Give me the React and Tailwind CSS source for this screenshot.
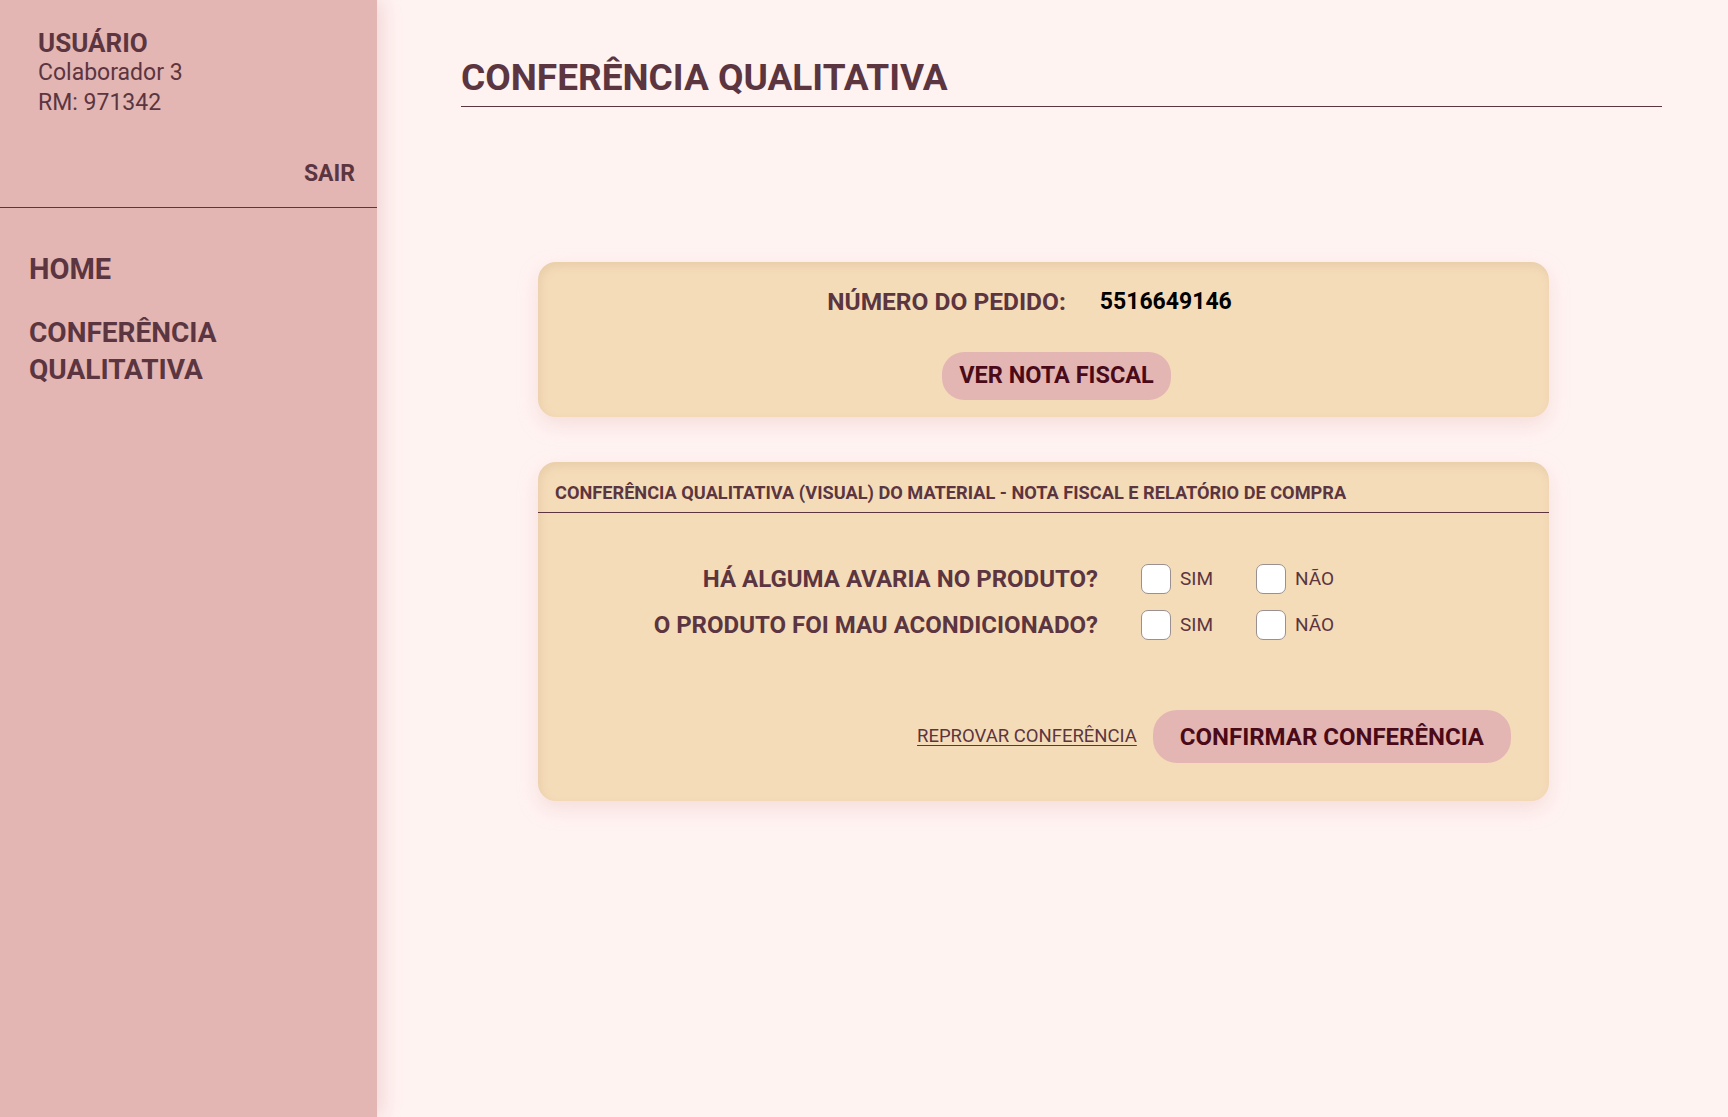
import { useState } from 'react'

const font = { fontFamily: '"Roboto", "Noto Sans", sans-serif' }

const Checkbox = ({ checked, onChange, label }) => (
  <label className="flex items-center gap-[9px] cursor-pointer">
    <input
      type="checkbox"
      checked={checked}
      onChange={onChange}
      className="appearance-none w-[30px] h-[30px] rounded-[7px] bg-white border border-[#9a9090] cursor-pointer"
    />
    <span className="text-[19px] text-[#5b3540]">{label}</span>
  </label>
)

const Pergunta = ({ texto, valor, setValor }) => (
  <div className="flex items-center h-[30px]">
    <span className="w-[603px] text-right text-[24px] leading-[30px] font-bold text-[#5b3540] pr-[43px]">{texto}</span>
    <div className="flex items-center gap-[43px]">
      <Checkbox label="SIM" checked={valor === 'SIM'} onChange={() => setValor(valor === 'SIM' ? null : 'SIM')} />
      <Checkbox label="NÃO" checked={valor === 'NAO'} onChange={() => setValor(valor === 'NAO' ? null : 'NAO')} />
    </div>
  </div>
)

export default function App() {
  const [avaria, setAvaria] = useState(null)
  const [acondicionado, setAcondicionado] = useState(null)

  return (
    <div className="flex h-[1117px] bg-[#fff3f2]" style={font}>
      {/* Sidebar */}
      <aside className="w-[377px] shrink-0 bg-[#e3b6b3] shadow-[6px_0_18px_rgba(227,182,179,0.45)] z-10 text-[#5b3540]">
        <div className="border-b border-[#5b3540] pb-[18px]">
          <div className="pl-[38px] pt-[28px]">
            <p className="text-[26px] leading-[30px] font-bold">USUÁRIO</p>
            <p className="text-[23px] leading-[30px]">Colaborador 3</p>
            <p className="text-[23px] leading-[30px]">RM: 971342</p>
          </div>
          <div className="flex justify-end pr-[22px] pt-[41px]">
            <button className="text-[23px] leading-[30px] font-bold text-[#5b3540]">SAIR</button>
          </div>
        </div>
        <nav className="pl-[29px] pt-[43px] flex flex-col gap-[26px]">
          <a className="text-[29px] leading-[37px] font-bold">HOME</a>
          <a className="text-[28px] leading-[37px] font-bold">CONFERÊNCIA<br />QUALITATIVA</a>
        </nav>
      </aside>

      {/* Conteúdo */}
      <main className="flex-1 pl-[84px] pr-[66px] pt-[55px]">
        <h1 className="text-[37px] leading-[46px] font-bold text-[#5b3540] border-b border-[#5b3540] pb-[5px]">
          CONFERÊNCIA QUALITATIVA
        </h1>

        <div className="ml-[77px] w-[1011px] mt-[155px] flex flex-col gap-[45px]">
          {/* Pedido */}
          <section className="h-[155px] rounded-[18px] bg-[#f5dcb9] shadow-[inset_2px_4px_10px_rgba(180,140,100,0.18),0_8px_20px_rgba(227,182,179,0.35)] flex flex-col items-center pt-[25px]">
            <div className="flex items-center gap-[34px] leading-[30px] font-bold mr-[28px]">
              <span className="text-[24.5px] text-[#5b3540]">NÚMERO DO PEDIDO:</span>
              <span className="text-[23px] text-black">5516649146</span>
            </div>
            <button className="mt-[35px] ml-[26px] h-[48px] px-[17px] rounded-[22px] bg-[#e3b6b3] text-[23.5px] font-bold text-[#4a0a18]">
              VER NOTA FISCAL
            </button>
          </section>

          {/* Conferência */}
          <section className="h-[339px] rounded-[18px] bg-[#f5dcb9] shadow-[inset_2px_4px_10px_rgba(180,140,100,0.18),0_8px_20px_rgba(227,182,179,0.35)]">
            <div className="h-[51px] border-b border-[#5b3540] pl-[17px] flex items-end pb-[8px]">
              <span className="text-[18.2px] leading-[22px] font-bold text-[#5b3540]">
                CONFERÊNCIA QUALITATIVA (VISUAL) DO MATERIAL - NOTA FISCAL E RELATÓRIO DE COMPRA
              </span>
            </div>
            <div className="pt-[51px] flex flex-col gap-[16px]">
              <Pergunta texto="HÁ ALGUMA AVARIA NO PRODUTO?" valor={avaria} setValor={setAvaria} />
              <Pergunta texto="O PRODUTO FOI MAU ACONDICIONADO?" valor={acondicionado} setValor={setAcondicionado} />
            </div>
            <div className="flex justify-end items-center gap-[16px] pr-[38px] mt-[70px]">
              <button className="text-[18.5px] text-[#5b3540] underline underline-offset-[3px]">REPROVAR CONFERÊNCIA</button>
              <button className="h-[53px] px-[27px] rounded-[24px] bg-[#e3b6b3] text-[24px] font-bold text-[#4a0a18]">
                CONFIRMAR CONFERÊNCIA
              </button>
            </div>
          </section>
        </div>
      </main>
    </div>
  )
}
